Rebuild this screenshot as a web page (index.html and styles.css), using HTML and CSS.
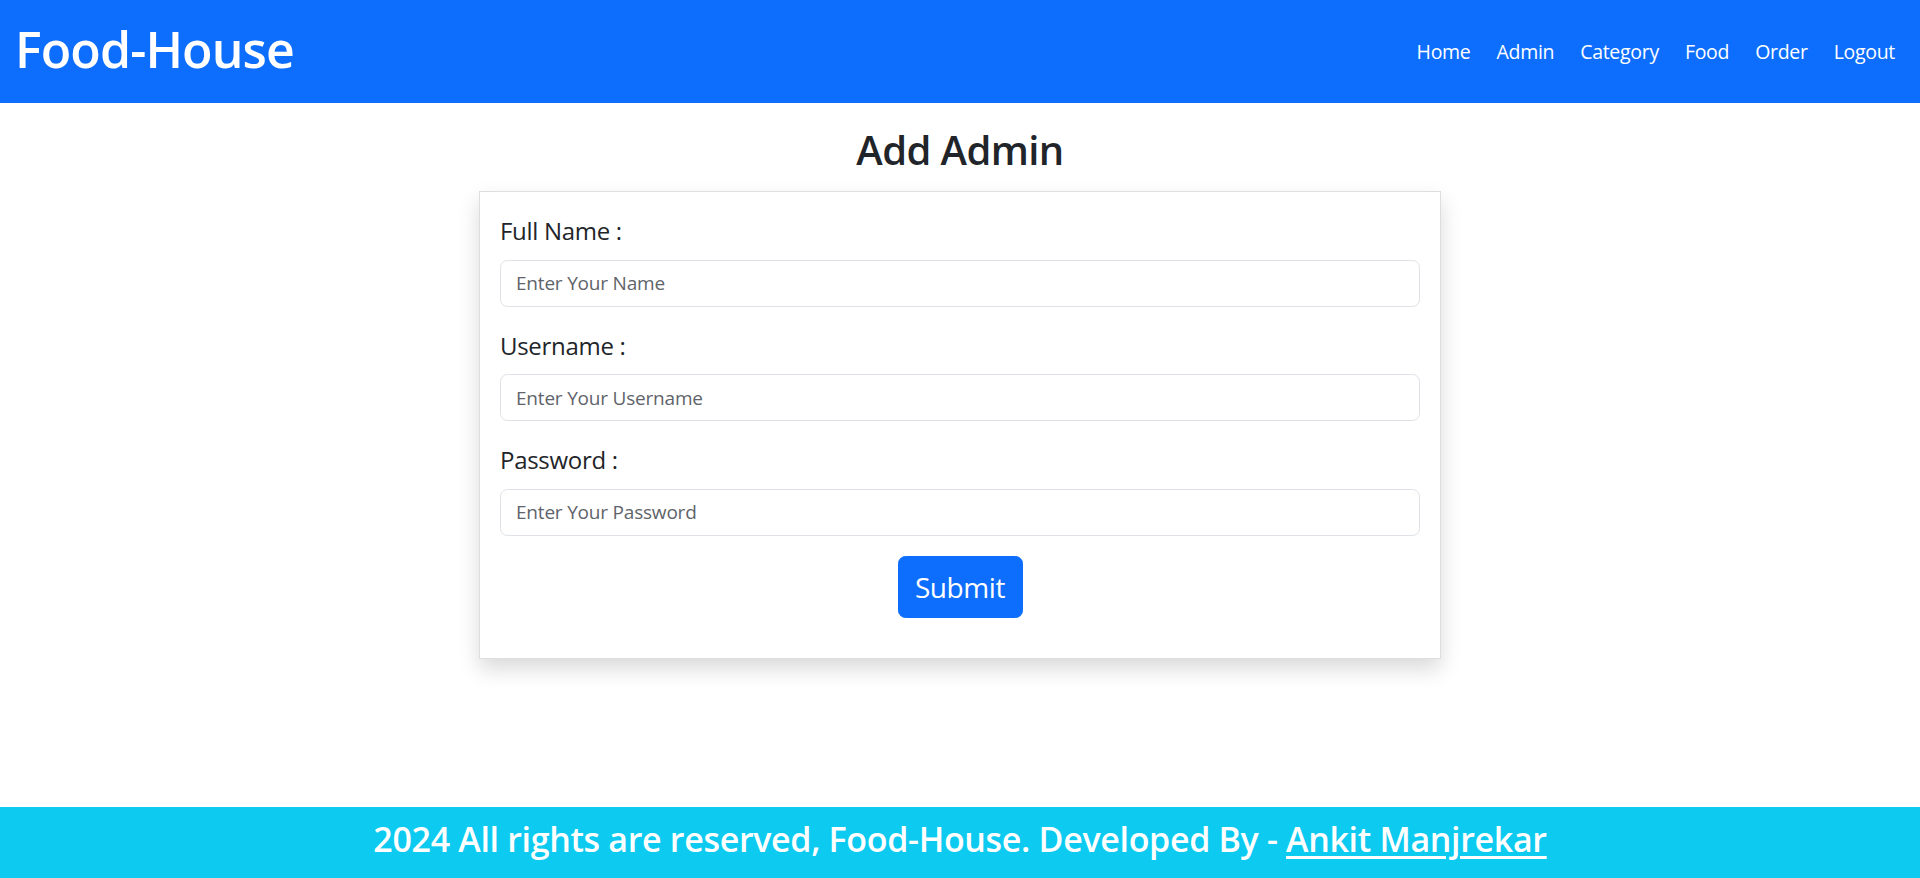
FILE: index.html
```html
<!DOCTYPE html>
<html lang="en">
<head>
<meta charset="utf-8">
<title>Food-House - Add Admin</title>
<link rel="stylesheet" href="styles.css">
</head>
<body>
<div class="page">
  <header class="navbar">
    <a class="brand" href="#">Food-House</a>
    <nav>
      <ul class="nav-list">
        <li><a href="#">Home</a></li>
        <li><a href="#">Admin</a></li>
        <li><a href="#">Category</a></li>
        <li><a href="#">Food</a></li>
        <li><a href="#">Order</a></li>
        <li><a href="#">Logout</a></li>
      </ul>
    </nav>
  </header>

  <main class="main">
    <h2 class="title">Add Admin</h2>
    <form class="card">
      <div class="group">
        <label class="label" for="fullname">Full Name :</label>
        <input class="input" id="fullname" type="text" placeholder="Enter Your Name">
      </div>
      <div class="group">
        <label class="label" for="username">Username :</label>
        <input class="input" id="username" type="text" placeholder="Enter Your Username">
      </div>
      <div class="group">
        <label class="label" for="password">Password :</label>
        <input class="input" id="password" type="password" placeholder="Enter Your Password">
      </div>
      <div class="actions">
        <button class="btn" type="button">Submit</button>
      </div>
    </form>
  </main>

  <footer class="footer">
    <h3 class="footer-text">2024 All rights are reserved, Food-House. Developed By - <a href="#">Ankit Manjrekar</a></h3>
  </footer>
</div>
</body>
</html>
```

FILE: styles.css
```css
* {
  box-sizing: border-box;
}

html, body {
  margin: 0;
  padding: 0;
}

body {
  font-family: "Open Sans", "Noto Sans", "Liberation Sans", sans-serif;
  color: #212529;
  background: #ffffff;
}

.page {
  min-height: 100vh;
  display: flex;
  flex-direction: column;
}

/* Navbar */
.navbar {
  height: 103px;
  background: #0d6efd;
  display: flex;
  align-items: center;
  justify-content: space-between;
  padding: 0 12px 0 15px;
}

.brand {
  color: #ffffff;
  text-decoration: none;
  font-size: 50px;
  font-weight: 600;
  letter-spacing: -0.9px;
  line-height: 1;
  margin-top: -6px;
}

.nav-list {
  list-style: none;
  margin: 0;
  padding: 0;
  display: flex;
}

.nav-list a {
  display: block;
  color: #ffffff;
  text-decoration: none;
  font-size: 19.5px;
  padding: 10px 13px;
  letter-spacing: -0.3px;
}

/* Main */
.main {
  flex: 1;
  padding-top: 23px;
}

.title {
  margin: 0 0 17px;
  text-align: center;
  font-size: 40px;
  font-weight: 600;
  line-height: 48px;
  letter-spacing: -0.6px;
}

.card {
  width: 962px;
  margin: 0 auto;
  background: #ffffff;
  border: 1px solid rgba(0, 0, 0, 0.13);
  box-shadow: 0 10px 20px rgba(0, 0, 0, 0.15);
  padding: 20px 20px 20px;
}

.group {
  margin-bottom: 20px;
}

.label {
  display: block;
  font-size: 24px;
  line-height: 37.5px;
  margin-bottom: 10px;
  letter-spacing: -0.3px;
}

.input {
  display: block;
  width: 100%;
  height: 47px;
  border: 1px solid #dee2e6;
  border-radius: 7.5px;
  padding: 0 15px;
  font-family: inherit;
  font-size: 19px;
  color: #212529;
  background: #ffffff;
  letter-spacing: -0.2px;
}

.input::placeholder {
  color: #5f646a;
}

.actions {
  display: flex;
  justify-content: center;
  margin-bottom: 20px;
}

.btn {
  height: 62px;
  width: 125px;
  padding: 0;
  border: 1px solid #0d6efd;
  border-radius: 7.5px;
  background: #0d6efd;
  color: #ffffff;
  font-family: inherit;
  font-size: 28px;
  letter-spacing: -0.4px;
  cursor: pointer;
}

/* Footer */
.footer {
  background: #0dcaf0;
  padding: 11px 12px 0;
  height: 71px;
}

.footer-text {
  margin: 0;
  text-align: center;
  color: #ffffff;
  font-size: 34px;
  font-weight: 600;
  line-height: 42px;
  letter-spacing: -0.33px;
}

.footer-text a {
  color: #ffffff;
  text-decoration: underline;
  text-decoration-thickness: 3px;
  text-underline-offset: 4px;
}
```
